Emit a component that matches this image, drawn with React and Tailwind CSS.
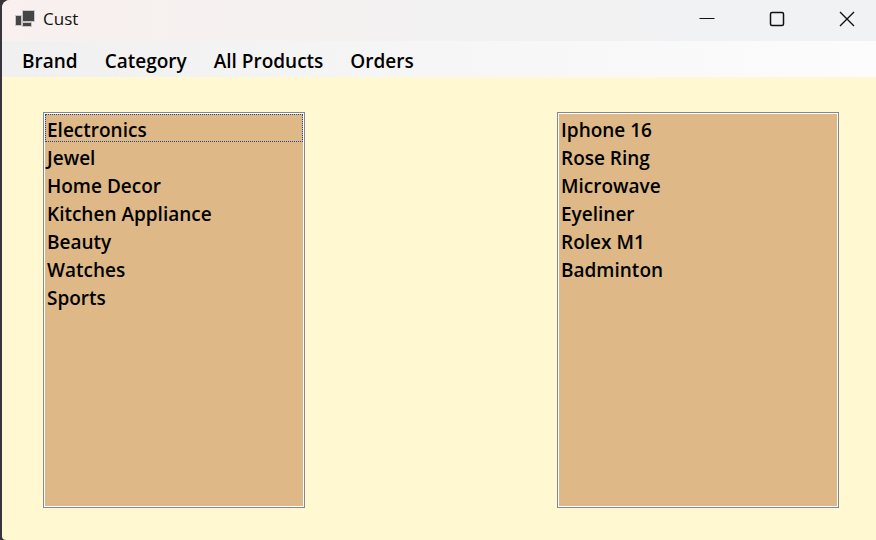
const menuItems = ["Brand", "Category", "All Products", "Orders"];

const categories = [
  "Electronics",
  "Jewel",
  "Home Decor",
  "Kitchen Appliance",
  "Beauty",
  "Watches",
  "Sports",
];

const products = [
  "Iphone 16",
  "Rose Ring",
  "Microwave",
  "Eyeliner",
  "Rolex M1",
  "Badminton",
];

function AppIcon() {
  return (
    <svg width="20" height="18" viewBox="0 0 20 18" aria-hidden="true">
      <g fill="#c9c5c4">
        <rect x="0" y="5" width="7" height="11" />
        <rect x="7" y="0" width="13" height="12" />
        <rect x="7" y="12" width="10" height="5" />
      </g>
      <g fill="#454545">
        <rect x="1" y="6" width="5" height="9" />
        <rect x="8" y="1" width="11" height="10" />
        <rect x="8" y="13" width="8" height="3" />
      </g>
    </svg>
  );
}

function CaptionButton({ label, children }) {
  return (
    <button type="button" aria-label={label} className="flex w-[70px] items-center justify-center">
      <svg width="16" height="16" viewBox="0 0 16 16" fill="none" stroke="#111111" aria-hidden="true">
        {children}
      </svg>
    </button>
  );
}

function TitleBar() {
  return (
    <header className="flex h-[41px] justify-between bg-linear-to-r from-[#f9f0ef] via-[#f3f2f2] to-[#f0f2f4]">
      <div className="flex items-center gap-2 pb-1 pl-[13px]">
        <AppIcon />
        <h1 className="text-[17px] leading-6 font-normal text-[#111111]">Cust</h1>
      </div>
      <div className="-mr-1.5 flex pb-1">
        <CaptionButton label="Minimize">
          <path d="M0.5 7.5h15" />
        </CaptionButton>
        <CaptionButton label="Maximize">
          <rect x="1.5" y="1.5" width="13" height="13" rx="1.5" strokeWidth="1.5" />
        </CaptionButton>
        <CaptionButton label="Close">
          <path d="M1 1l14 14M15 1L1 15" strokeWidth="1.4" />
        </CaptionButton>
      </div>
    </header>
  );
}

function MenuBar() {
  return (
    <nav className="flex h-9 items-center gap-[27px] bg-linear-to-r from-[#f0f0f0] to-[#fcfcfc] pt-1 pl-5">
      {menuItems.map((item) => (
        <button key={item} type="button" className="text-[19px] leading-7">
          {item}
        </button>
      ))}
    </nav>
  );
}

function ListBox({ label, items, focusedItem, className }) {
  return (
    <div className={`border border-[#828790] bg-white p-px ${className}`}>
      <select
        size={14}
        aria-label={label}
        className="block h-[392px] w-full overflow-hidden bg-[#deb887] text-[19px] outline-none"
      >
        {items.map((item) => (
          <option
            key={item}
            className={`h-7 min-h-7 border border-dotted px-px pt-0.5 pb-0 font-semibold ${
              item === focusedItem ? "border-[#21478a]" : "border-transparent"
            }`}
          >
            {item}
          </option>
        ))}
      </select>
    </div>
  );
}

export default function App() {
  return (
    <div className="min-h-screen bg-[#35353b] pl-0.5">
      <div className="flex min-h-screen flex-col overflow-hidden rounded-tl-lg rounded-bl-sm bg-[#fff8d0] font-['Open_Sans','Noto_Sans',sans-serif] font-semibold text-black">
        <TitleBar />
        <MenuBar />
        <main className="flex items-start justify-between gap-6 pt-[35px] pr-[37px] pb-8 pl-[41px]">
          <ListBox
            label="Categories"
            items={categories}
            focusedItem="Electronics"
            className="w-[262px]"
          />
          <ListBox label="Products" items={products} className="w-[282px]" />
        </main>
      </div>
    </div>
  );
}
